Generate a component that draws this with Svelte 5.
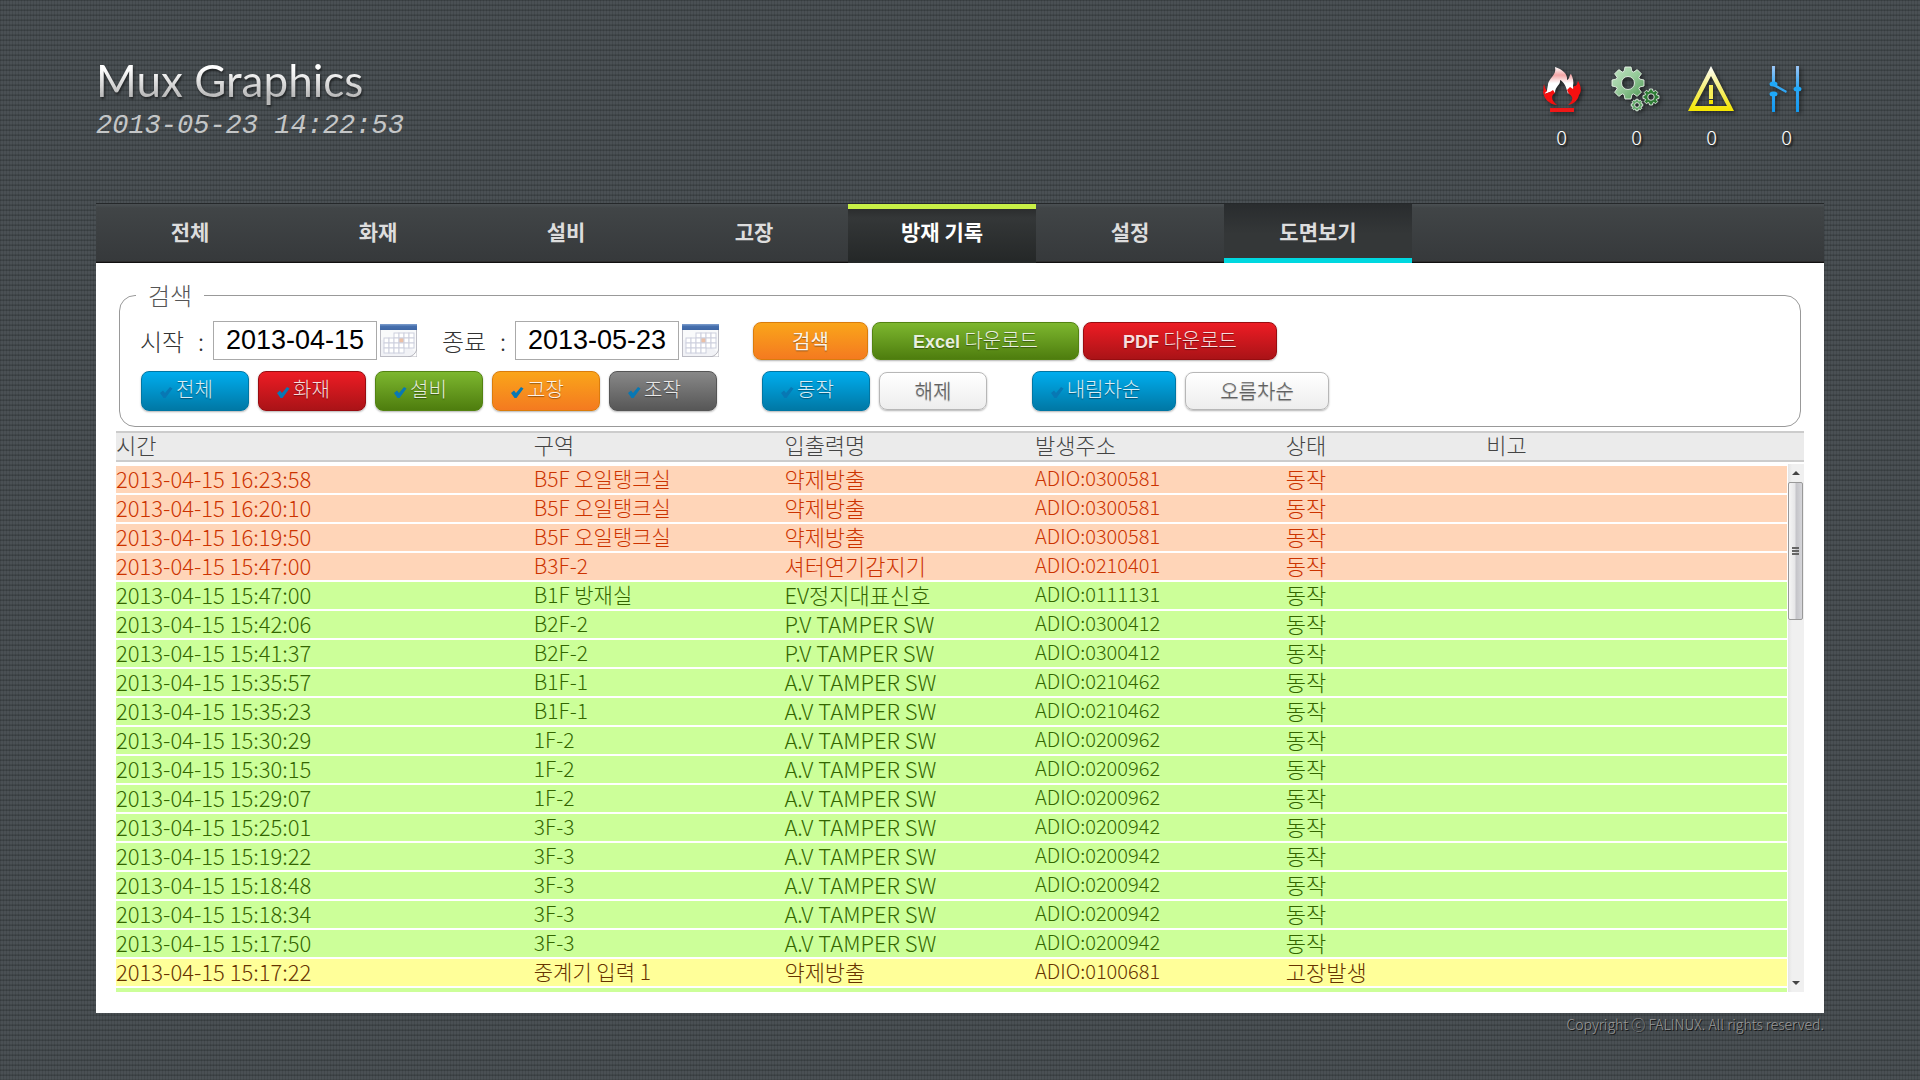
<script>
	const tabs = ['전체', '화재', '설비', '고장', '방재 기록', '설정', '도면보기'];
	let current = '방재 기록';

	const categories = [
		{ label: '전체', color: 'blue' },
		{ label: '화재', color: 'red' },
		{ label: '설비', color: 'green' },
		{ label: '고장', color: 'orange' },
		{ label: '조작', color: 'gray' }
	];

	const columns = ['시간', '구역', '입출력명', '발생주소', '상태', '비고'];

	const records = [
		['fire', '16:23:58', 'B5F 오일탱크실', '약제방출', '0300581', '동작'],
		['fire', '16:20:10', 'B5F 오일탱크실', '약제방출', '0300581', '동작'],
		['fire', '16:19:50', 'B5F 오일탱크실', '약제방출', '0300581', '동작'],
		['fire', '15:47:00', 'B3F-2', '셔터연기감지기', '0210401', '동작'],
		['equip', '15:47:00', 'B1F 방재실', 'EV정지대표신호', '0111131', '동작'],
		['equip', '15:42:06', 'B2F-2', 'P.V TAMPER SW', '0300412', '동작'],
		['equip', '15:41:37', 'B2F-2', 'P.V TAMPER SW', '0300412', '동작'],
		['equip', '15:35:57', 'B1F-1', 'A.V TAMPER SW', '0210462', '동작'],
		['equip', '15:35:23', 'B1F-1', 'A.V TAMPER SW', '0210462', '동작'],
		['equip', '15:30:29', '1F-2', 'A.V TAMPER SW', '0200962', '동작'],
		['equip', '15:30:15', '1F-2', 'A.V TAMPER SW', '0200962', '동작'],
		['equip', '15:29:07', '1F-2', 'A.V TAMPER SW', '0200962', '동작'],
		['equip', '15:25:01', '3F-3', 'A.V TAMPER SW', '0200942', '동작'],
		['equip', '15:19:22', '3F-3', 'A.V TAMPER SW', '0200942', '동작'],
		['equip', '15:18:48', '3F-3', 'A.V TAMPER SW', '0200942', '동작'],
		['equip', '15:18:34', '3F-3', 'A.V TAMPER SW', '0200942', '동작'],
		['equip', '15:17:50', '3F-3', 'A.V TAMPER SW', '0200942', '동작'],
		['fault', '15:17:22', '중계기 입력 1', '약제방출', '0100681', '고장발생']
	];

	const calendarDays = [0, 1, 2, 3, 4, 5];
</script>

{#snippet check()}
	<svg class="check" viewBox="0 0 14 14" aria-hidden="true">
		<path d="M1 8 L4 5.500 L6 8 L11 2 L13.500 3.500 L6.500 13 L4.500 13 Z" />
	</svg>
{/snippet}

{#snippet calendar()}
	<svg viewBox="0 0 37 33" aria-hidden="true">
		<rect x="0.5" y="0.5" width="36" height="32" fill="#f1f2f6" stroke="#bcbcc4" />
		<rect width="37" height="6" fill="url(#calTop)" />
		<path d="M1 6 H36 V30 Q24 12 1 16 Z" fill="#fbfbfd" opacity="0.8" />
		{#each [9, 14, 19, 24] as y, row}
			{#each calendarDays as col}
				{#if !(row === 0 && col < 2) && !(row === 3 && col > 3)}
					<rect
						x={4 + col * 5}
						{y}
						width="5"
						height="5"
						fill={row === 1 && col === 3 ? '#ecc0a6' : '#fff'}
						stroke="#cdd0de"
					/>
				{/if}
			{/each}
		{/each}
		<path d="M28 33 Q35 32 37 25 V33 Z" fill="#fff" stroke="#b5b5bd" />
	</svg>
{/snippet}

{#snippet gear(cx, cy, scale, fill)}
	<g transform="translate({cx} {cy}) scale({scale})" {fill} stroke="#e6f3e6" stroke-width={0.9 / scale}>
		<path
			fill-rule="evenodd"
			d="M-3 -16 H3 L4 -11.600 L5.700 -10.900 L9.200 -13.400 L13.400 -9.200 L10.900 -5.700 L11.600 -4 L16 -3 V3 L11.600 4 L10.900 5.700 L13.400 9.200 L9.200 13.400 L5.700 10.900 L4 11.600 L3 16 H-3 L-4 11.600 L-5.700 10.900 L-9.200 13.400 L-13.400 9.200 L-10.900 5.700 L-11.600 4 L-16 3 V-3 L-11.600 -4 L-10.900 -5.700 L-13.400 -9.200 L-9.200 -13.400 L-5.700 -10.900 L-4 -11.600 Z M6.500 0 A6.500 6.500 0 1 0 -6.500 0 A6.500 6.500 0 1 0 6.500 0 Z"
		/>
	</g>
{/snippet}

<svg class="defs" aria-hidden="true">
	<defs>
		<linearGradient id="calTop" x2="0" y2="1">
			<stop offset="0" stop-color="#7f9fce" />
			<stop offset="0.4" stop-color="#4670ae" />
			<stop offset="1" stop-color="#3f67a4" />
		</linearGradient>
		<linearGradient id="flame" x2="0" y2="1">
			<stop offset="0" stop-color="#fff" />
			<stop offset="0.3" stop-color="#f3a5a5" />
			<stop offset="0.6" stop-color="#fff" />
		</linearGradient>
		<linearGradient id="gearFill" x2="1" y2="1">
			<stop offset="0" stop-color="#c4e6c6" />
			<stop offset="0.5" stop-color="#96ca9a" />
			<stop offset="1" stop-color="#4a9650" />
		</linearGradient>
		<linearGradient id="warn" x2="0" y2="1">
			<stop offset="0" stop-color="#fff" />
			<stop offset="0.5" stop-color="#f6ef74" />
			<stop offset="1" stop-color="#f5e600" />
		</linearGradient>
		<linearGradient id="wire" x1="0" y1="0" x2="0" y2="46" gradientUnits="userSpaceOnUse">
			<stop offset="0" stop-color="#9cc6f5" />
			<stop offset="0.4" stop-color="#3aaaf5" />
			<stop offset="1" stop-color="#1199f0" />
		</linearGradient>
	</defs>
</svg>

<div class="page">
	<header>
		<div class="brand">
			<h1>Mux Graphics</h1>
			<time datetime="2013-05-23T14:22:53">2013-05-23 14:22:53</time>
		</div>
		<ul class="status">
			<li>
				<svg width="48" height="48" viewBox="0 0 48 48" role="img" aria-label="화재">
					<path
						fill="url(#flame)"
						d="M17 1 C24 3 30 8 29 14 C32 13 31 9 33 8 C35 12 36 16 35 20 L37 28 L32 25 L30 28 C28 20 26 16 22 14 C23 19 17 20 17 27 L12 26 L7 28 L6 26 L9 25 C9 22 10 20 10 18 C11 12 19 9 17 1 Z"
					/>
					<path
						fill="#f51010"
						d="M6 18 C7 22 8 24 9 25 L6 28 L12 26 L15 24 L17 27 C12 30 14 35 19 39 C10 38 6 32 5 26 C6 25 5 21 6 18 Z M40 15 C43 20 44 25 41 29 C40 34 36 38 30 39 C35 35 36 31 31 28 L29 24 L32 21 L35 23 L36 20 C39 20 39 18 40 15 Z"
					/>
					<rect x="12" y="42" width="24" height="4" fill="#f01818" />
				</svg>
				<span>0</span>
			</li>
			<li>
				<svg width="54" height="48" viewBox="0 0 54 48" role="img" aria-label="설비">
					{@render gear(18, 17, 1, 'url(#gearFill)')}
					{@render gear(41, 31, 0.5, '#2f7d36')}
					{@render gear(27, 39, 0.36, '#5ca564')}
				</svg>
				<span>0</span>
			</li>
			<li>
				<svg width="48" height="48" viewBox="0 0 48 48" role="img" aria-label="고장">
					<path fill="url(#warn)" fill-rule="evenodd" d="M23 0 L46 45 H0 Z M23 10 L7 40 H39 Z" />
					<rect x="21" y="19" width="4" height="14" fill="#f6ee58" />
					<rect x="21" y="34" width="4" height="4" fill="#f5e600" />
				</svg>
				<span>0</span>
			</li>
			<li>
				<svg width="48" height="48" viewBox="0 0 48 48" role="img" aria-label="조작">
					<g fill="url(#wire)">
						<rect x="9" width="3" height="18" />
						<rect x="9" y="28" width="3" height="18" />
						<rect x="33" width="3" height="46" />
						<path d="M10 17 L24 25 L23 27 L10 20 Z" />
					</g>
					<g fill="#1fa8f8">
						<ellipse cx="10.500" cy="18" rx="4" ry="2.500" />
						<ellipse cx="10.500" cy="28" rx="4" ry="2.500" />
						<ellipse cx="34.500" cy="23" rx="4" ry="2.500" />
					</g>
				</svg>
				<span>0</span>
			</li>
		</ul>
	</header>

	<nav>
		{#each tabs as tab}
			<a href="#{tab}" class:active={tab === current} class:drawing={tab === '도면보기'}>{tab}</a>
		{/each}
	</nav>

	<main>
		<fieldset>
			<legend>검색</legend>
			<div class="row dates">
				<label for="start">시작 <span>:</span></label>
				<input id="start" type="text" value="2013-04-15" />
				<button class="pick" aria-label="시작일 선택">{@render calendar()}</button>
				<label class="second" for="end">종료 <span>:</span></label>
				<input id="end" type="text" value="2013-05-23" />
				<button class="pick" aria-label="종료일 선택">{@render calendar()}</button>
				<div class="actions">
					<button class="btn orange search">검색</button>
					<button class="btn green excel"><b>Excel</b> 다운로드</button>
					<button class="btn red pdf"><b>PDF</b> 다운로드</button>
				</div>
			</div>
			<div class="row filters">
				<div class="group">
					{#each categories as c}
						<button class="btn toggle {c.color}">{@render check()}{c.label}</button>
					{/each}
				</div>
				<div class="group">
					<button class="btn toggle blue">{@render check()}동작</button>
					<button class="btn toggle white">해제</button>
				</div>
				<div class="group">
					<button class="btn toggle wide blue">{@render check()}내림차순</button>
					<button class="btn toggle wide white">오름차순</button>
				</div>
			</div>
		</fieldset>

		<div class="list-head">
			<table>
				<thead>
					<tr>
						{#each columns as column}
							<th scope="col">{column}</th>
						{/each}
					</tr>
				</thead>
			</table>
		</div>
		<div class="list-body">
			<div class="rows">
				<table>
					<tbody>
						{#each records as [type, time, zone, name, address, state]}
							<tr class={type}>
								<td>2013-04-15 {time}</td>
								<td class="zone">{zone}</td>
								<td>{name}</td>
								<td class="address">ADIO:{address}</td>
								<td>{state}</td>
								<td></td>
							</tr>
						{/each}
						<tr class="equip"><td colspan="6"></td></tr>
					</tbody>
				</table>
			</div>
			<div class="scrollbar" aria-hidden="true">
				<span class="arrow up"></span>
				<span class="thumb"><i></i><i></i><i></i></span>
				<span class="arrow down"></span>
			</div>
		</div>
	</main>

	<footer>Copyright ⓒ FALINUX. All rights reserved.</footer>
</div>

<style>
	:global(body) {
		background-color: #43494c;
		background-image: repeating-linear-gradient(90deg, rgba(0, 0, 0, 0.1) 0 1px, transparent 1px 3px),
			repeating-linear-gradient(#3c4245 0 1px, #4a5054 1px 4px, #42484b 4px 5px);
	}
	.defs {
		display: block;
		width: 0;
		height: 0;
	}
	.page {
		margin: 0 5%;
		font-family: 'Noto Sans CJK KR', sans-serif;
		font-weight: 300;
		font-size: 22px;
	}

	header {
		display: flex;
		justify-content: space-between;
		height: 203px;
	}
	.brand {
		padding-top: 52px;
	}
	h1 {
		margin: 0;
		font: 400 44px/56px Lato, sans-serif;
		background: linear-gradient(#fff 30%, #b8b8b8 80%);
		background-clip: text;
		color: transparent;
		filter: drop-shadow(1px 2px 1px rgba(0, 0, 0, 0.5));
	}
	time {
		display: block;
		font: italic 27px/36px 'Liberation Mono', monospace;
		color: #c4c6c7;
	}
	.status {
		display: flex;
		margin: 0;
		padding: 66px 0 0;
		list-style: none;
	}
	.status li {
		display: flex;
		flex-direction: column;
		align-items: center;
		width: 75px;
		color: #fff;
		font-size: 20px;
		line-height: 46px;
		text-shadow: 2px 2px 2px #111;
	}
	.status svg {
		overflow: visible;
		filter: drop-shadow(2px 2px 2px rgba(0, 0, 0, 0.5));
	}

	nav {
		display: flex;
		box-sizing: border-box;
		height: 60px;
		border-top: 1px solid #25282a;
		background: linear-gradient(#4b5053, #414547 4px, #36393b 57px, #4a4a4a 57px, #111 58px);
	}
	nav a {
		width: 188px;
		color: #ddd;
		font-size: 21px;
		font-weight: 700;
		line-height: 54px;
		text-align: center;
		text-decoration: none;
	}
	nav .active {
		color: #fff;
		background: linear-gradient(#c8f046 5px, #2b2d2e 5px, #343738 14px, #242727);
	}
	nav .drawing {
		background: linear-gradient(#292c2e, #343738 50%, #343738 54px, #00d8e0 54px);
	}

	main {
		padding: 22px 20px 21px;
		background: #fff;
	}
	fieldset {
		min-width: 0;
		margin: 0 3px 4px;
		padding: 0 0 15px 20px;
		border: 1px solid #999;
		border-radius: 16px;
		color: #333;
	}
	legend {
		margin-left: -4px;
		padding: 0 12px;
		color: #555;
		font-size: 24px;
		line-height: 20px;
	}
	.row {
		display: flex;
		align-items: center;
	}
	.dates {
		padding-top: 16px;
		font-size: 24px;
		white-space: nowrap;
	}
	label {
		display: flex;
		justify-content: space-between;
		box-sizing: border-box;
		width: 73px;
		padding-right: 9px;
		line-height: 39px;
	}
	.second {
		margin-left: 25px;
	}
	input {
		box-sizing: border-box;
		width: 164px;
		height: 39px;
		padding: 0 12px;
		border: 1px solid #aaa;
		color: #000;
		font: 27px 'Liberation Sans', sans-serif;
	}
	.pick {
		width: 37px;
		height: 33px;
		margin-left: 3px;
		padding: 0;
		border: 0;
		background: none;
	}
	.pick svg {
		display: block;
	}
	.actions {
		display: flex;
		gap: 4px;
		margin-left: 34px;
	}
	.btn {
		box-sizing: border-box;
		height: 38px;
		padding: 0;
		border: 1px solid;
		border-radius: 8px;
		box-shadow: 0 1px 2px rgba(0, 0, 0, 0.3);
		font: 300 20px/30px 'Noto Sans CJK KR', sans-serif;
		text-shadow: 0 1px 1px rgba(0, 0, 0, 0.4);
		white-space: nowrap;
	}
	.btn b {
		font-family: 'Liberation Sans', sans-serif;
		font-size: 18px;
		font-weight: 700;
	}
	.search {
		width: 115px;
		font-weight: 400;
	}
	.excel {
		width: 207px;
	}
	.pdf {
		width: 194px;
	}
	.blue {
		border-color: #0076a3;
		background: linear-gradient(#00adee, #0078a5);
		color: #d9eef7;
	}
	.red {
		border-color: #980c10;
		background: linear-gradient(#ed1c24, #aa1317);
		color: #faddde;
	}
	.green {
		border-color: #538312;
		background: linear-gradient(#7db72f, #4e7d0e);
		color: #e8f0de;
	}
	.orange {
		border-color: #da7c0c;
		background: linear-gradient(#faa51a, #f47a20);
		color: #fef4e9;
	}
	.gray {
		border-color: #555;
		background: linear-gradient(#888, #575757);
		color: #e9e9e9;
	}
	.white {
		border-color: #b7b7b7;
		background: linear-gradient(#fff, #ededed);
		color: #606060;
	}
	.filters {
		gap: 45px;
		padding: 11px 0 0 1px;
	}
	.group {
		display: flex;
		align-items: center;
		gap: 9px;
	}
	.toggle {
		width: 108px;
		height: 40px;
		padding: 0 18px 4px 0;
	}
	.wide {
		width: 144px;
	}
	.toggle.white {
		height: 38px;
		padding: 0;
	}
	.check {
		width: 14px;
		height: 14px;
		margin: 0 3px -2px 0;
		fill: #0878b4;
	}

	table {
		width: 100%;
		table-layout: fixed;
		border-spacing: 0 2px;
		text-align: left;
	}
	th,
	td {
		width: 15%;
		height: 27px;
		padding: 0;
		font-weight: 300;
		vertical-align: top;
		white-space: nowrap;
	}
	th:first-child,
	td:first-child {
		width: 25%;
	}
	th:nth-child(5) {
		width: 12%;
	}
	th:last-child {
		width: 18%;
	}
	.list-head {
		padding-right: 17px;
		border: solid #ccc;
		border-width: 2px 0;
		background: #ebebeb;
		color: #444;
	}
	.list-head table {
		border-spacing: 0;
	}
	th {
		line-height: 23px;
	}
	.list-body {
		display: flex;
		height: 530px;
	}
	.rows {
		flex: 1;
		padding-top: 2px;
		overflow: hidden;
	}
	td {
		line-height: 24px;
	}
	.zone {
		font-size: 21px;
	}
	.address {
		font-size: 20px;
	}
	.fire {
		background: #ffd5b8;
		color: #c30;
	}
	.equip {
		background: #cf9;
		color: #360;
	}
	.fault {
		background: #ff9;
		color: #630;
	}
	.scrollbar {
		display: flex;
		flex-direction: column;
		align-items: center;
		width: 17px;
		margin-top: 2px;
		background: linear-gradient(90deg, #fff 1px, #e4e4e4 1px, #f0f0f0 5px);
	}
	.arrow {
		width: 0;
		height: 0;
		border: 4px solid transparent;
	}
	.up {
		margin: 3px 0 7px;
		border-bottom-color: #444;
	}
	.down {
		margin: auto 0 3px;
		border-top-color: #444;
	}
	.thumb {
		display: flex;
		flex-direction: column;
		align-items: center;
		justify-content: center;
		gap: 1px;
		box-sizing: border-box;
		width: 15px;
		height: 138px;
		border: 1px solid #999;
		border-radius: 2px;
		background: linear-gradient(90deg, #f5f5f5, #e6e6e8 45%, #c4c4c9 55%, #d6d6da);
	}
	.thumb i {
		width: 7px;
		height: 2px;
		background: #666;
	}

	footer {
		padding-bottom: 44px;
		color: #999;
		font-size: 14px;
		line-height: 23px;
		text-align: right;
		text-shadow: 1px 1px 0 #111;
	}
</style>
